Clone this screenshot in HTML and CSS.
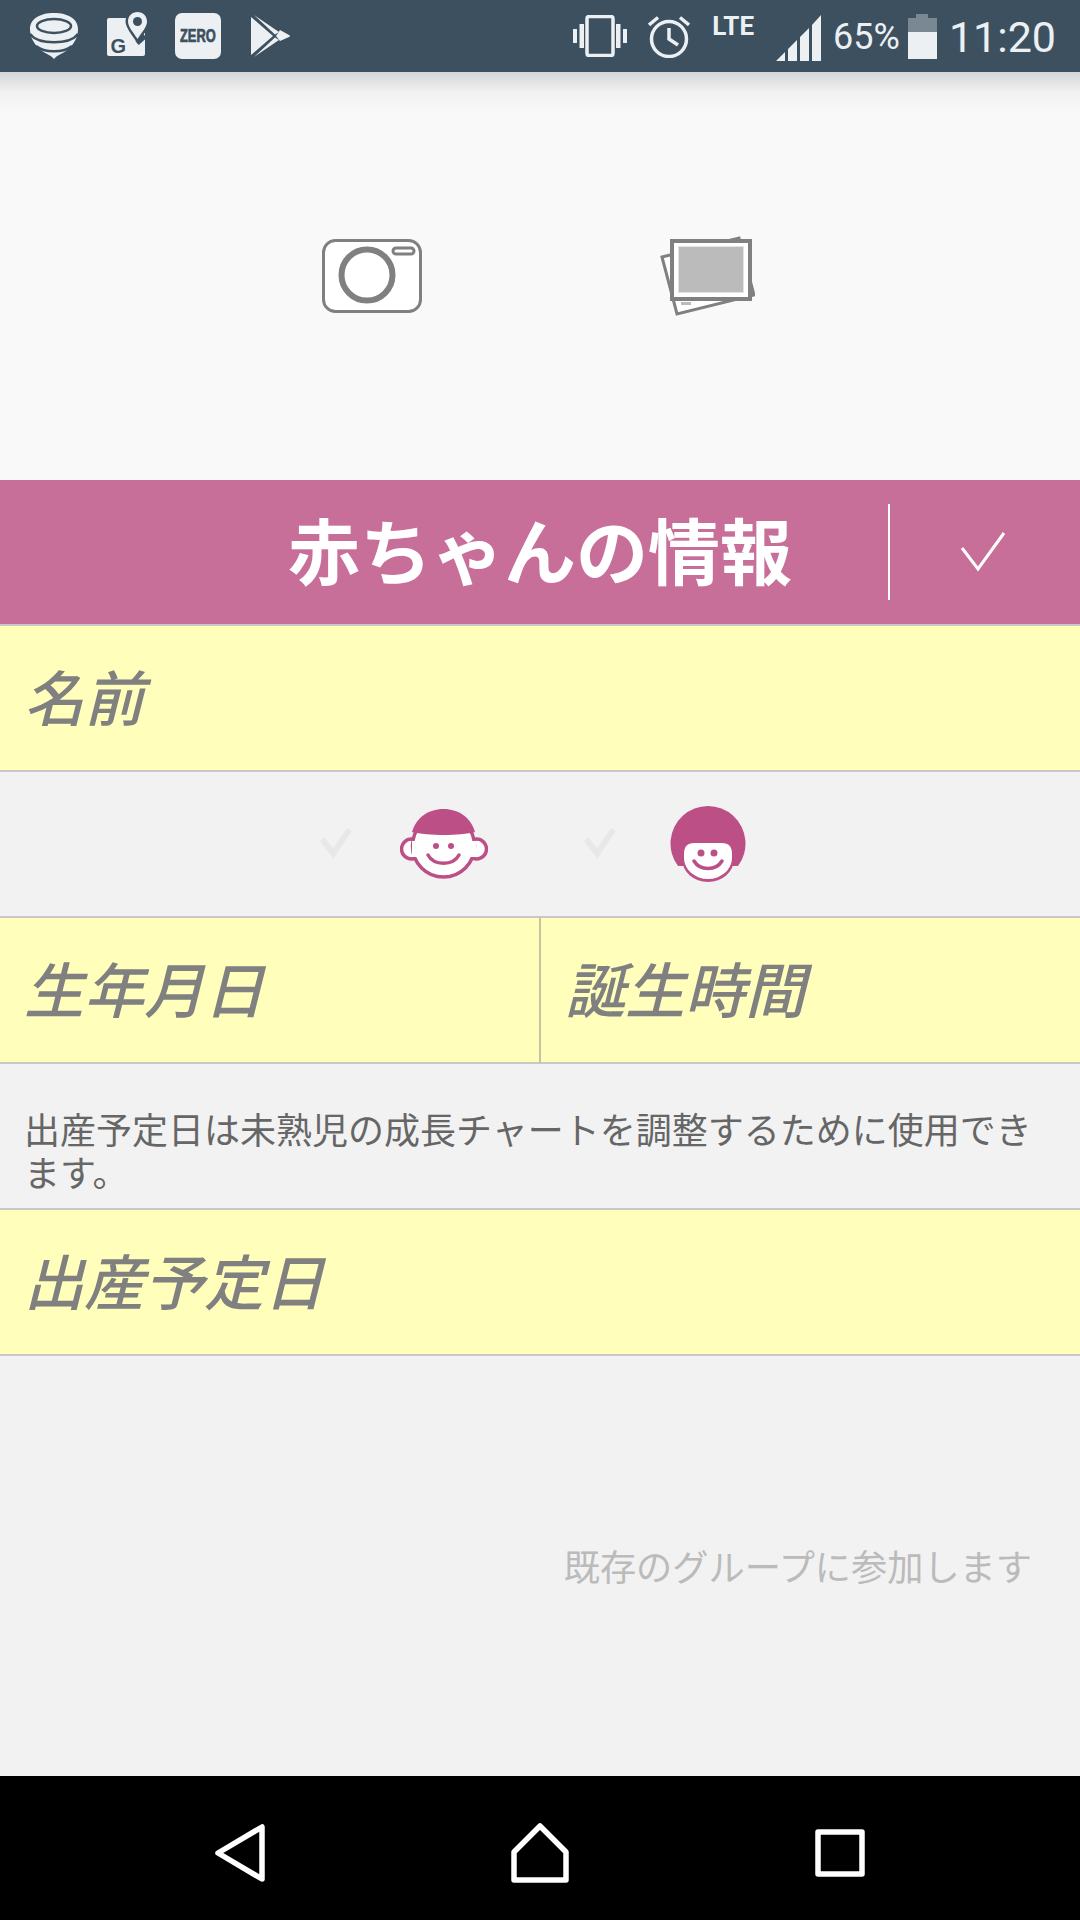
FILE: index.html
```html
<!DOCTYPE html>
<html lang="ja">
<head>
    <meta charset="UTF-8">
    <meta name="viewport" content="width=device-width, initial-scale=1.0">
    <title>赤ちゃんの情報</title>
    <link rel="stylesheet" href="styles.css">
</head>
<body>

<!-- Status bar -->
<div class="status-bar">
    <div class="status-left">
        <svg class="icon-swirl" width="48" height="46" viewBox="0 0 48 46">
            <path class="light" d="M24 0C38 0 48 6 48 16C48 24 44 32 36 38C32 41 27 42 24 46C21 42 16 41 12 38C4 32 0 24 0 16C0 6 10 0 24 0Z"/>
            <ellipse class="dark-line" cx="24" cy="13" rx="17" ry="7"/>
            <path class="dark-line" d="M0 21C8 32 40 32 48 21M6 33C14 40 34 40 42 33"/>
        </svg>
        <svg class="icon-map" width="40" height="44" viewBox="0 0 40 44">
            <rect class="light" x="0" y="6" width="38" height="38" rx="2"/>
            <path class="dark-line wide" d="M30 31L38 24"/>
            <path class="light pin" d="M30.500 0C36 0 40 4 40 9.500C40 15 35 20 30.500 27C26 20 21 15 21 9.500C21 4 25 0 30.500 0Z"/>
            <circle class="dark" cx="30.500" cy="9.500" r="4.500"/>
            <text class="map-g" x="3.500" y="41">G</text>
        </svg>
        <svg class="icon-zero" width="46" height="46" viewBox="0 0 46 46">
            <rect class="light" width="46" height="46" rx="7"/>
            <text class="zero-text" transform="translate(5 29) scale(.92 1.25)">ZERO</text>
        </svg>
        <svg class="icon-play" width="40" height="42" viewBox="0 0 40 42">
            <path class="light" d="M0 2L22 21L0 40Z"/>
            <path class="light" d="M3 0L28 17L24 19.500Z"/>
            <path class="light" d="M3 42L28 25L24 22.500Z"/>
            <path class="light" d="M29 15L38 20Q40 21 38 22L29 26L25 21Z"/>
        </svg>
    </div>
    <div class="status-right">
        <svg class="icon-vibrate" width="54" height="42" viewBox="0 0 54 42">
            <rect class="light-line" x="14" y="1.500" width="26" height="39" rx="2"/>
            <path class="light" d="M0 14H4V28H0ZM6.500 9H11V33H6.500ZM43 9H47.500V33H43ZM50 14H54V28H50Z"/>
        </svg>
        <svg class="icon-alarm" width="42" height="44" viewBox="0 0 42 44">
            <circle class="light-line" cx="21" cy="25" r="17.500"/>
            <path class="light-line" d="M21 14V25L30 31"/>
            <path class="light-line" d="M1 11L10 3.500M41 11L32 3.500"/>
        </svg>
        <span class="lte">LTE</span>
        <svg class="icon-signal" width="45" height="46" viewBox="0 0 45 46">
            <path class="light" d="M0 46L9 37V46ZM12 34L21 25V46H12ZM24 22L33 13V46H24ZM36 10L45 0V46H36Z"/>
        </svg>
        <span class="battery-text">65%</span>
        <svg class="icon-battery" width="29" height="45" viewBox="0 0 29 45">
            <path class="battery-empty" d="M8 0H20V4H29V18H0V4H8Z"/>
            <path class="light" d="M0 18H29V45H0Z"/>
        </svg>
        <span class="clock">11:20</span>
    </div>
</div>

<!-- Photo picker -->
<div class="photo-area">
    <svg width="100" height="74" viewBox="0 0 100 74">
        <rect class="photo-line" x="1.500" y="1.500" width="97" height="71" rx="12"/>
        <circle class="lens" cx="45" cy="36" r="25.500"/>
        <rect class="photo-line" x="71" y="9" width="21" height="6" rx="3"/>
    </svg>
    <svg width="95" height="80" viewBox="0 0 95 80">
        <polygon class="photo-line" points="2,21 79,2 94,59 17,78"/>
        <rect class="grey-fill" x="21" y="66" width="10" height="3"/>
        <rect class="photo-front" x="12" y="5" width="78" height="58"/>
        <rect class="grey-edge" x="18" y="10" width="66" height="47"/>
        <rect class="grey-fill" x="19" y="11" width="64" height="45"/>
    </svg>
</div>

<!-- Title -->
<div class="title-bar">
    <div></div>
    <h1>赤ちゃんの情報</h1>
    <div class="title-action">
        <div class="title-divider"></div>
        <svg width="46" height="42" viewBox="0 0 46 42">
            <path class="done-check" d="M2 17L18 38L44 2"/>
        </svg>
    </div>
</div>

<div class="field">名前</div>

<div class="gender-row">
    <svg class="gender-check" width="32" height="32" viewBox="0 0 32 32"><path d="M0 13.300L4 9.300L13.300 20L27.300 0L31.700 3.300L13.300 30.700Z"/></svg>
    <svg class="boy" width="88" height="70" viewBox="0 0 88 70">
        <circle class="face" cx="11.500" cy="40" r="10"/>
        <circle class="face" cx="76.500" cy="40" r="10"/>
        <circle class="face" cx="43.500" cy="37" r="31"/>
        <path class="face-plain" d="M12 32H76V48H12Z"/>
        <path class="pink" d="M12 23C16 9 28 0 43.500 0C59 0 71 9 75 23C60 27 28 27 12 23Z"/>
        <circle class="pink" cx="36" cy="37" r="3"/>
        <circle class="pink" cx="51" cy="37" r="3"/>
        <path class="smile" d="M28 46C34 57 53 57 59 46"/>
    </svg>
    <svg class="gender-check" width="32" height="32" viewBox="0 0 32 32"><path d="M0 13.300L4 9.300L13.300 20L27.300 0L31.700 3.300L13.300 30.700Z"/></svg>
    <svg class="girl" width="76" height="76" viewBox="0 0 76 76">
        <path class="pink" d="M8 60A37.500 37.500 0 1 1 68 60Z"/>
        <path class="pink" d="M12 48H64V53A26 23 0 0 1 12 53Z"/>
        <path class="face-plain" d="M14 48Q14 37 24 37H52Q62 37 62 48V52A24 21 0 0 1 14 52Z"/>
        <circle class="pink" cx="31" cy="47" r="3.500"/>
        <circle class="pink" cx="44" cy="47" r="3.500"/>
        <path class="smile" d="M24 55C30 65 46 65 52 55"/>
    </svg>
</div>

<div class="field-row">
    <div class="field half">生年月日</div>
    <div class="field half">誕生時間</div>
</div>

<div class="note">出産予定日は未熟児の成長チャートを調整するために使用できます。</div>

<div class="field">出産予定日</div>

<div class="join-area">
    <span class="join-link">既存のグループに参加します</span>
</div>

<!-- Navigation bar -->
<div class="nav-bar">
    <svg width="50" height="58" viewBox="0 0 50 58">
        <path class="nav-line" d="M3 29L47 3V55Z"/>
    </svg>
    <svg width="58" height="60" viewBox="0 0 58 60">
        <path class="nav-line" d="M29 3L55 29V57H3V29Z"/>
    </svg>
    <svg width="50" height="48" viewBox="0 0 50 48">
        <rect class="nav-line" x="3" y="3" width="44" height="42"/>
    </svg>
</div>

</body>
</html>
```

FILE: styles.css
```css
* {
    box-sizing: border-box;
}
body {
    margin: 0;
    width: 1080px;
    height: 1920px;
    display: flex;
    flex-direction: column;
    background-color: #f2f2f3;
    font-family: "Noto Sans CJK JP", "Noto Sans", sans-serif;
    overflow: hidden;
}

/* Status bar */
.status-bar {
    height: 72px;
    flex-shrink: 0;
    display: flex;
    justify-content: space-between;
    align-items: center;
    padding: 0 24px 0 30px;
    background-color: #3d5060;
    color: #ecf0f3;
    font-family: Roboto, sans-serif;
}
.status-left, .status-right {
    display: flex;
    align-items: center;
}
.status-left svg, .status-right svg {
    flex-shrink: 0;
}
.icon-map {
    margin-left: 29px;
    margin-top: -4px;
}
.icon-zero {
    margin-left: 28px;
}
.icon-play {
    margin-left: 30px;
}
.icon-alarm {
    margin-left: 21px;
}
.lte {
    margin-left: 22px;
    margin-top: -20px;
    font-size: 26px;
    font-weight: 700;
    line-height: 28px;
}
.icon-signal {
    margin-left: 22px;
    margin-top: 4px;
}
.battery-text {
    margin-left: 12px;
    margin-top: 2px;
    font-size: 36px;
}
.icon-battery {
    margin-left: 8px;
}
.clock {
    margin-left: 12px;
    margin-top: 2px;
    font-size: 43px;
}
.light {
    fill: #ecf0f3;
}
.dark {
    fill: #3d5060;
}
.dark-line {
    fill: none;
    stroke: #3d5060;
    stroke-width: 2.500;
}
.dark-line.wide {
    stroke-width: 5;
}
.light-line {
    fill: none;
    stroke: #ecf0f3;
    stroke-width: 3.500;
}
.pin {
    stroke: #3d5060;
    stroke-width: 5;
    paint-order: stroke;
}
.map-g {
    font-family: "Liberation Sans", sans-serif;
    font-size: 20px;
    font-weight: 700;
    fill: #3d5060;
}
.zero-text {
    font-family: "Liberation Sans", sans-serif;
    font-size: 14px;
    font-weight: 700;
    fill: #3d5060;
    stroke: #3d5060;
    stroke-width: 0.600;
}
.battery-empty {
    fill: #7a8894;
}

/* Photo picker */
.photo-area {
    height: 408px;
    flex-shrink: 0;
    display: flex;
    justify-content: center;
    align-items: center;
    gap: 238px;
    padding-right: 3px;
    background: linear-gradient(#d6d6d6, #f1f1f1 20px, #f9f9f9 40px);
}
.photo-line {
    fill: #fff;
    stroke: #808080;
    stroke-width: 3;
}
.lens {
    fill: #fff;
    stroke: #808080;
    stroke-width: 6;
}
.photo-front {
    fill: #fff;
    stroke: #808080;
    stroke-width: 4;
}
.grey-fill {
    fill: #bbb;
}
.grey-edge {
    fill: #e4e4e4;
}

/* Title */
.title-bar {
    height: 146px;
    flex-shrink: 0;
    display: grid;
    grid-template-columns: 1fr auto 1fr;
    align-items: center;
    background-color: #c76e99;
    border-bottom: 2px solid #c8c8c8;
}
.title-bar h1 {
    margin: 0 0 10px;
    font-size: 72px;
    font-weight: 700;
    color: #fff;
}
.title-action {
    display: flex;
    align-items: center;
    gap: 70px;
    padding-left: 96px;
}
.title-divider {
    width: 2px;
    height: 96px;
    background-color: #fff;
}
.done-check {
    fill: none;
    stroke: #fff;
    stroke-width: 3;
}

/* Form fields */
.field {
    height: 146px;
    flex-shrink: 0;
    display: flex;
    align-items: center;
    padding: 0 0 8px 24px;
    background-color: #ffffbb;
    border-bottom: 2px solid #c8c8c8;
    font-size: 60px;
    font-style: italic;
    font-weight: 500;
    color: #808080;
}
.field-row {
    display: flex;
    flex-shrink: 0;
}
.half {
    width: 539px;
}
.half + .half {
    width: 541px;
    border-left: 2px solid #c6c2a8;
    padding-left: 24px;
}
.gender-row {
    height: 146px;
    flex-shrink: 0;
    display: flex;
    align-items: center;
    padding-left: 320px;
    border-bottom: 2px solid #c8c8c8;
}
.gender-check {
    fill: #e8e8e8;
}
.boy {
    margin-left: 48px;
    margin-right: 96px;
}
.girl {
    margin-left: 54px;
}
.face {
    fill: #fff;
    stroke: #bd4f87;
    stroke-width: 3.500;
}
.face-plain {
    fill: #fff;
}
.pink {
    fill: #bd4f87;
}
.smile {
    fill: none;
    stroke: #bd4f87;
    stroke-width: 3.500;
    stroke-linecap: round;
}
.note {
    height: 146px;
    flex-shrink: 0;
    padding: 43px 30px 0 24px;
    border-bottom: 2px solid #c8c8c8;
    font-size: 36px;
    line-height: 43px;
    color: #666;
}
.join-area {
    flex: 1;
    display: flex;
    justify-content: flex-end;
    align-items: center;
    padding: 0 48px 3px 0;
}
.join-link {
    font-size: 36.200px;
    color: #bbb;
}

/* Navigation bar */
.nav-bar {
    height: 144px;
    flex-shrink: 0;
    display: grid;
    grid-template-columns: repeat(3, 300px);
    justify-content: center;
    justify-items: center;
    align-items: center;
    padding-top: 9px;
    background-color: #000;
}
.nav-line {
    fill: none;
    stroke: #fff;
    stroke-width: 5.500;
    stroke-linejoin: round;
}
```
